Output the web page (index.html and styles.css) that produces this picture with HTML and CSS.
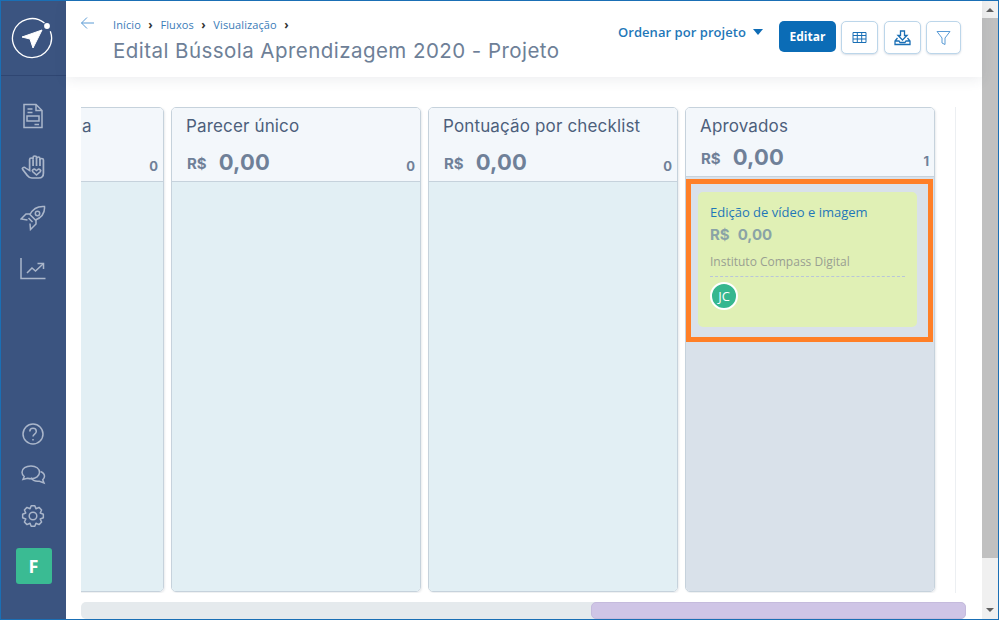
FILE: index.html
```html
<!DOCTYPE html>
<html lang="pt-BR">
<head>
<meta charset="utf-8">
<title>Edital Bússola Aprendizagem 2020 - Projeto</title>
<link rel="stylesheet" href="styles.css">
</head>
<body>
<div class="frame">
  <aside class="sidebar">
    <div class="logo">
      <svg width="42" height="42" viewBox="0 0 42 42" fill="none"><path d="M33.500 6.100A19.500 19.500 0 1 0 39.300 14.300" stroke="#fff" stroke-width="1.300"/><circle cx="36" cy="9" r="2.900" fill="#fff"/><path d="M11 20 31 13 22 31 19 22Z" fill="#fff" stroke="#fff" stroke-linejoin="round"/></svg>
    </div>
    <nav class="nav-top">
      <svg class="nav-icon" width="26" height="26" viewBox="0 0 26 26" fill="none"><path d="M4 1.500h12l6 6v17H4z"/><path d="M16 1.500v6h6M7.500 6h5M7.500 9.500h5M7 13h12v5H7zM14.500 21.500H19"/></svg>
      <svg class="nav-icon" width="26" height="26" viewBox="0 0 26 26" fill="none"><g transform="translate(1 0) scale(1.150 1)"><path d="M7.500 13V5.500a1.500 1.500 0 0 1 3 0V3.500a1.500 1.500 0 0 1 3 0v1a1.500 1.500 0 0 1 3 0V6a1.500 1.500 0 0 1 3 0v13c0 3-1.500 5-4 5h-6c-2 0-3-1-4-2.500l-4-6c-1-1.500 1-3 2.500-1.500L7.500 16.500z"/><path d="M10.500 5.500v6.500M13.500 4v8M16.500 5v7"/><path d="M13.500 21l-3.200-3.200c-1.300-1.600.9-3.500 2.300-2.100l.9.8.9-.8c1.400-1.400 3.600.5 2.300 2.100z"/></g></svg>
      <svg class="nav-icon" width="26" height="26" viewBox="0 0 26 26" fill="none"><path d="M24.500 1.500c-6-.5-11.500 2-14.500 8l5.500 5.500C21.500 12.500 25 7.500 24.500 1.500z"/><circle cx="17.500" cy="8.500" r="2.200"/><path d="M10.500 9H6l-5 5 6.500 1M16 14.500v4.500L10.500 24.500 10 18.500M8.500 13 12.500 17"/></svg>
      <svg class="nav-icon" width="26" height="26" viewBox="0 0 26 26" fill="none"><path d="M1 2v20.500h24.500M7 17l5-5 3.500 3L23 8"/><path d="M17.500 7.500H23.500v5.500"/></svg>
    </nav>
    <nav class="nav-bottom">
      <svg class="nav-icon" width="26" height="26" viewBox="0 0 26 26" fill="none"><circle cx="13" cy="13" r="10"/><path d="M9.800 10.500c0-4.300 6.500-4.300 6.500 0 0 2.500-3.300 2.600-3.300 5"/><path d="M13 18v1.500"/></svg>
      <svg class="nav-icon" width="26" height="26" viewBox="0 0 26 26" fill="none"><path d="M11 4c-5 0-9 2.500-9 6.200 0 1.800 1 3.200 2.200 4.300L3 17.500l4.500-1.200c1.100.3 2.300.5 3.500.5 5 0 8.500-2.800 8.500-6.500S16 4 11 4z"/><path d="M20.500 9.500c2.500 1 4 2.700 4 4.800 0 1.400-.7 2.600-1.800 3.500l1.300 3.200-4.500-1.800c-3.500.5-7-.8-8.500-3.500"/></svg>
      <svg class="nav-icon" width="26" height="26" viewBox="0 0 26 26" fill="none" stroke-linejoin="round"><circle cx="13" cy="13" r="3.800"/><path d="M23.340 11.180 23.340 14.820 20.210 15.980 21.600 19.020 19.020 21.600 15.980 20.210 14.820 23.340 11.180 23.340 10.020 20.210 6.980 21.600 4.400 19.020 5.790 15.980 2.660 14.820 2.660 11.180 5.790 10.020 4.400 6.980 6.980 4.400 10.020 5.790 11.180 2.660 14.820 2.660 15.980 5.790 19.020 4.400 21.600 6.980 20.210 10.020Z"/></svg>
      <div class="user-tile">F</div>
    </nav>
  </aside>

  <main class="main">
    <header class="topbar">
      <svg class="back" width="16" height="14" viewBox="0 0 16 14" fill="none"><path d="M14 7H1.500M7 1.500 1.500 7 7 12.500" stroke="#5b9bd5"/></svg>
      <div class="heading">
        <div class="crumbs">
          <a>Início</a><span class="sep">›</span><a>Fluxos</a><span class="sep">›</span><a>Visualização</a><span class="sep">›</span>
        </div>
        <h1>Edital Bússola Aprendizagem 2020 - Projeto</h1>
      </div>
      <div class="sort"><span>Ordenar por projeto</span><i class="caret"></i></div>
      <button class="btn-primary">Editar</button>
      <button class="btn-icon">
        <svg width="15" height="13" viewBox="0 0 15 13" fill="none" stroke="#1a6fb5"><path d="M1 1.500h13v10H1zM1 4.500h13M1 8h13M5.300 1.500v10M9.700 1.500v10" /></svg>
      </button>
      <button class="btn-icon btn-wide-gap">
        <svg width="17" height="16" viewBox="0 0 17 16" fill="none" stroke="#1a6fb5" stroke-width="1.300"><path d="M6.500 1h4v4.500H13L8.500 10 4 5.500h2.500z"/><path d="M3.500 8 1 11v3.500h15V11l-2.500-3M1 11h4l1 1.500h5l1-1.500h4"/></svg>
      </button>
      <button class="btn-icon btn-last">
        <svg width="15" height="16" viewBox="0 0 15 16" fill="none" stroke="#5b9bd5"><path d="M1 1.500h13L9 8v6.500l-3-1.500V8z"/></svg>
      </button>
    </header>

    <section class="board-wrap">
      <div class="board">
        <article class="col col-clipped">
          <div class="col-head">
            <div class="col-title">a</div>
            <div class="col-sum"><b class="count">0</b></div>
          </div>
          <div class="col-body"></div>
        </article>
        <article class="col">
          <div class="col-head">
            <div class="col-title">Parecer único</div>
            <div class="col-sum"><b class="cur">R$</b><b class="val">0,00</b><b class="count">0</b></div>
          </div>
          <div class="col-body"></div>
        </article>
        <article class="col">
          <div class="col-head">
            <div class="col-title">Pontuação por checklist</div>
            <div class="col-sum"><b class="cur">R$</b><b class="val">0,00</b><b class="count">0</b></div>
          </div>
          <div class="col-body"></div>
        </article>
        <article class="col col-done">
          <div class="col-head">
            <div class="col-title">Aprovados</div>
            <div class="col-sum"><b class="cur">R$</b><b class="val">0,00</b><b class="count">1</b></div>
          </div>
          <div class="col-body">
            <div class="highlight">
              <div class="card">
                <div class="card-title">Edição de vídeo e imagem</div>
                <div class="card-val"><span>R$</span><span>0,00</span></div>
                <div class="card-org">Instituto Compass Digital</div>
                <div class="avatar">JC</div>
              </div>
            </div>
          </div>
        </article>
      </div>
      <div class="hscroll"><div class="hthumb"></div></div>
    </section>
  </main>

  <div class="vscroll">
    <i class="arrow-up"></i>
    <div class="vthumb"></div>
    <i class="arrow-down"></i>
  </div>
</div>
</body>
</html>
```
FILE: styles.css
```css
* { box-sizing: border-box; }
html, body { margin: 0; height: 100%; overflow: hidden; background: #fff; }
body { font-family: "Open Sans", "Liberation Sans", sans-serif; }

.frame {
  width: 999px;
  height: 620px;
  display: flex;
  border: 1px solid #1a6fb5;
  overflow: hidden;
}

/* Sidebar */
.sidebar {
  flex: 0 0 65px;
  background: #3b5480;
  display: flex;
  flex-direction: column;
  align-items: center;
  padding-right: 2px;
}
.logo {
  flex: 0 0 75px;
  align-self: stretch;
  margin-right: -2px;
  display: flex;
  align-items: center;
  justify-content: center;
  padding-right: 3px;
  border-bottom: 1px solid #2f4672;
}
.nav-top {
  display: flex;
  flex-direction: column;
  gap: 25px;
  margin-top: 27px;
}
.nav-bottom {
  margin-top: auto;
  margin-bottom: 35px;
  display: flex;
  flex-direction: column;
  align-items: center;
  gap: 15px;
}
.nav-icon { display: block; stroke: #aab6ca; stroke-width: 1.500; }
.user-tile {
  width: 36px;
  height: 36px;
  margin: 4px -2px 0 0;
  border-radius: 3px;
  background: #3abb93;
  color: #fff;
  font: 700 18px/36px "Open Sans", sans-serif;
  text-align: center;
}

/* Main */
.main { flex: 1; min-width: 0; display: flex; flex-direction: column; }
.topbar {
  flex: 0 0 76px;
  display: flex;
  align-items: flex-start;
  padding: 20px 21px 0 14px;
  box-shadow: 0 3px 12px rgba(60, 70, 90, .09);
  position: relative;
}
.back { margin-top: -5px; flex: none; }
.heading { margin-left: 17px; flex: 1; margin-top: -4px; }
.crumbs {
  display: flex;
  align-items: center;
  font-size: 11px;
  letter-spacing: .1px;
  line-height: 16px;
  color: #3a7cb8;
}
.sep { margin: 0 7.500px; color: #333; font-weight: 700; font-size: 12px; line-height: 14px; }
h1 {
  margin: 5px 0 0;
  font: 400 20.500px/26px "Inter", sans-serif;
  letter-spacing: .45px;
  color: #6e7f97;
}
.sort {
  display: flex;
  align-items: center;
  margin-right: 16px;
  margin-top: 1px;
  height: 20px;
  font-size: 13px;
  font-weight: 600;
  letter-spacing: .05px;
  color: #1f77b8;
}
.caret {
  margin-left: 7px;
  margin-top: -1px;
  border: 5.500px solid transparent;
  border-top: 6px solid #0f6cb5;
  border-bottom: 0;
}
.btn-primary {
  flex: none;
  width: 57px;
  height: 31px;
  border: 0;
  border-radius: 5px;
  background: #0b6cb6;
  color: #fff;
  font: 700 12px "Open Sans", sans-serif;
  padding: 0;
}
.btn-icon {
  flex: none;
  width: 37px;
  height: 33px;
  margin-left: 5px;
  padding: 0;
  border: 1px solid #bcd6ea;
  border-radius: 5px;
  background: #fff;
  box-shadow: 0 1px 2px rgba(60, 90, 130, .2);
  display: flex;
  align-items: center;
  justify-content: center;
}
.btn-wide-gap { margin-left: 6px; }
.btn-last { width: 35px; }

/* Board */
.board-wrap {
  flex: 1;
  min-height: 0;
  padding: 30px 16px 0 15px;
  display: flex;
  flex-direction: column;
}
.board {
  flex: 0 0 486px;
  display: flex;
  justify-content: flex-end;
  gap: 7px;
  overflow: hidden;
  padding-right: 20px;
  border-right: 1px solid #eceff2;
  margin-right: 10px;
}
.col {
  flex: 0 0 250px;
  height: 485px;
  display: flex;
  flex-direction: column;
  border: 1px solid #c6d2dc;
  border-radius: 5px;
  overflow: hidden;
  box-shadow: 1px 1px 2px rgba(70, 90, 110, .12);
}
.col-head {
  flex: 0 0 74px;
  background: #f3f7fb;
  border-bottom: 1px solid #c6d2dc;
  padding: 6px 5px 0 14px;
}
.col-done .col-head { flex-basis: 69px; }
.col-title {
  font: 400 17px/24px "Inter", sans-serif;
  letter-spacing: .15px;
  color: #4d5f7c;
  white-space: nowrap;
}
.col-clipped .col-title { margin-left: 153px; }
.col-sum {
  display: flex;
  align-items: flex-end;
  height: 28px;
  margin-top: 10px;
  color: #6f8098;
  font-family: "Inter", sans-serif;
}
.col-done .col-sum { margin-top: 5px; }
.cur { font-size: 15px; line-height: 24px; margin-left: 1px; }
.val { font-size: 22px; line-height: 28px; margin-left: 12px; letter-spacing: .2px; }
.count { margin: 0 0 2px auto; font-size: 13px; line-height: 16px; }
.col-body { flex: 1; background: #e2eff4; }
.col-done .col-body { background: #d9e1ea; }

.highlight {
  margin: 2px 1px 0 0;
  height: 163px;
  border: 5px solid #ff7f27;
  padding: 8px 11px 10px 7px;
}
.card {
  height: 135px;
  border-radius: 5px;
  background: #e0f0b5;
  padding: 12px 12px 0;
}
.card-title { font-size: 13px; line-height: 16px; color: #1f77b8; }
.card-val {
  display: flex;
  gap: 8px;
  margin-top: 6px;
  font: 700 15px/18px "Inter", sans-serif;
  color: #8aa3a6;
}
.card-org {
  margin-top: 10px;
  padding-bottom: 6px;
  border-bottom: 1px dashed #b9c6d8;
  font-size: 12px;
  line-height: 16px;
  color: #999f92;
}
.avatar {
  width: 28px;
  height: 28px;
  margin-top: 5px;
  border-radius: 50%;
  border: 2px solid #fff;
  background: #36b78f;
  color: #fff;
  font-size: 13px;
  line-height: 24px;
  text-align: center;
}

.hscroll {
  flex: 0 0 17px;
  margin-top: 9px;
  border-radius: 5px;
  background: #e5eaed;
  display: flex;
  justify-content: flex-end;
}
.hthumb {
  width: 375px;
  border: 1px solid #c5bbdd;
  border-radius: 5px;
  background: #cfc5e6;
}

/* Window scrollbar */
.vscroll {
  flex: 0 0 16px;
  background: #f0f0f0;
  display: flex;
  flex-direction: column;
  align-items: center;
  padding-top: 7px;
}
.arrow-up { border: 4px solid transparent; border-bottom: 4px solid #606060; border-top: 0; }
.vthumb { width: 100%; height: 540px; margin-top: 6px; background: #c0c0c0; }
.arrow-down { margin-top: auto; margin-bottom: 7px; border: 4px solid transparent; border-top: 4px solid #606060; border-bottom: 0; }
```
